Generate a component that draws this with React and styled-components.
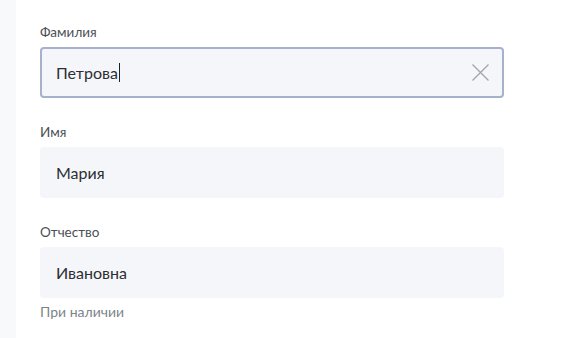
import React from 'react'
import styled, { createGlobalStyle } from 'styled-components'

const Global = createGlobalStyle`
  html, body {
    margin: 0;
    padding: 0;
    background: #fff;
    font-family: Lato, "Noto Sans", sans-serif;
  }
`

const Page = styled.div`
  display: flex;
  min-height: 338px;
`

const SideStrip = styled.div`
  width: 16px;
  background: #f8f9fb;
`

const Form = styled.div`
  display: flex;
  flex-direction: column;
  width: 464px;
  padding: 22px 0 0 24px;
`

const Field = styled.div`
  display: flex;
  flex-direction: column;
  margin-bottom: 24px;
`

const Label = styled.div`
  font-size: 13.5px;
  line-height: 20px;
  color: #4b4f55;
  margin-bottom: 5px;
`

const Input = styled.div`
  box-sizing: border-box;
  height: 51px;
  display: flex;
  align-items: center;
  padding: 0 14px;
  border-radius: 4px;
  background: #f5f6fa;
  border: 2px solid ${p => (p.$focused ? '#a6b1cb' : '#f5f6fa')};
  font-size: 16px;
  color: #2b2f33;
`

const Value = styled.span`
  flex: 1;
  display: flex;
  align-items: center;
`

const Caret = styled.span`
  display: inline-block;
  width: 1px;
  height: 19px;
  background: #1f2328;
  margin-left: 1px;
`

const Clear = styled.span`
  display: flex;
  margin-right: -1px;
`

const Hint = styled.div`
  font-size: 14px;
  line-height: 18px;
  color: #7d838b;
  margin-top: 5px;
`

const fields = [
  { label: 'Фамилия', value: 'Петрова', focused: true },
  { label: 'Имя', value: 'Мария' },
  { label: 'Отчество', value: 'Ивановна', hint: 'При наличии' },
]

export default function App() {
  return (
    <>
      <Global />
      <Page>
        <SideStrip />
        <Form>
          {fields.map(f => (
            <Field key={f.label}>
              <Label>{f.label}</Label>
              <Input $focused={f.focused}>
                <Value>
                  {f.value}
                  {f.focused && <Caret />}
                </Value>
                {f.focused && (
                  <Clear>
                    <svg width="17" height="17" viewBox="0 0 17 17">
                      <path d="M0.5 0.5 L16.5 16.5 M16.5 0.5 L0.5 16.5" stroke="#a0a5ad" strokeWidth="1.3" fill="none" />
                    </svg>
                  </Clear>
                )}
              </Input>
              {f.hint && <Hint>{f.hint}</Hint>}
            </Field>
          ))}
        </Form>
      </Page>
    </>
  )
}
